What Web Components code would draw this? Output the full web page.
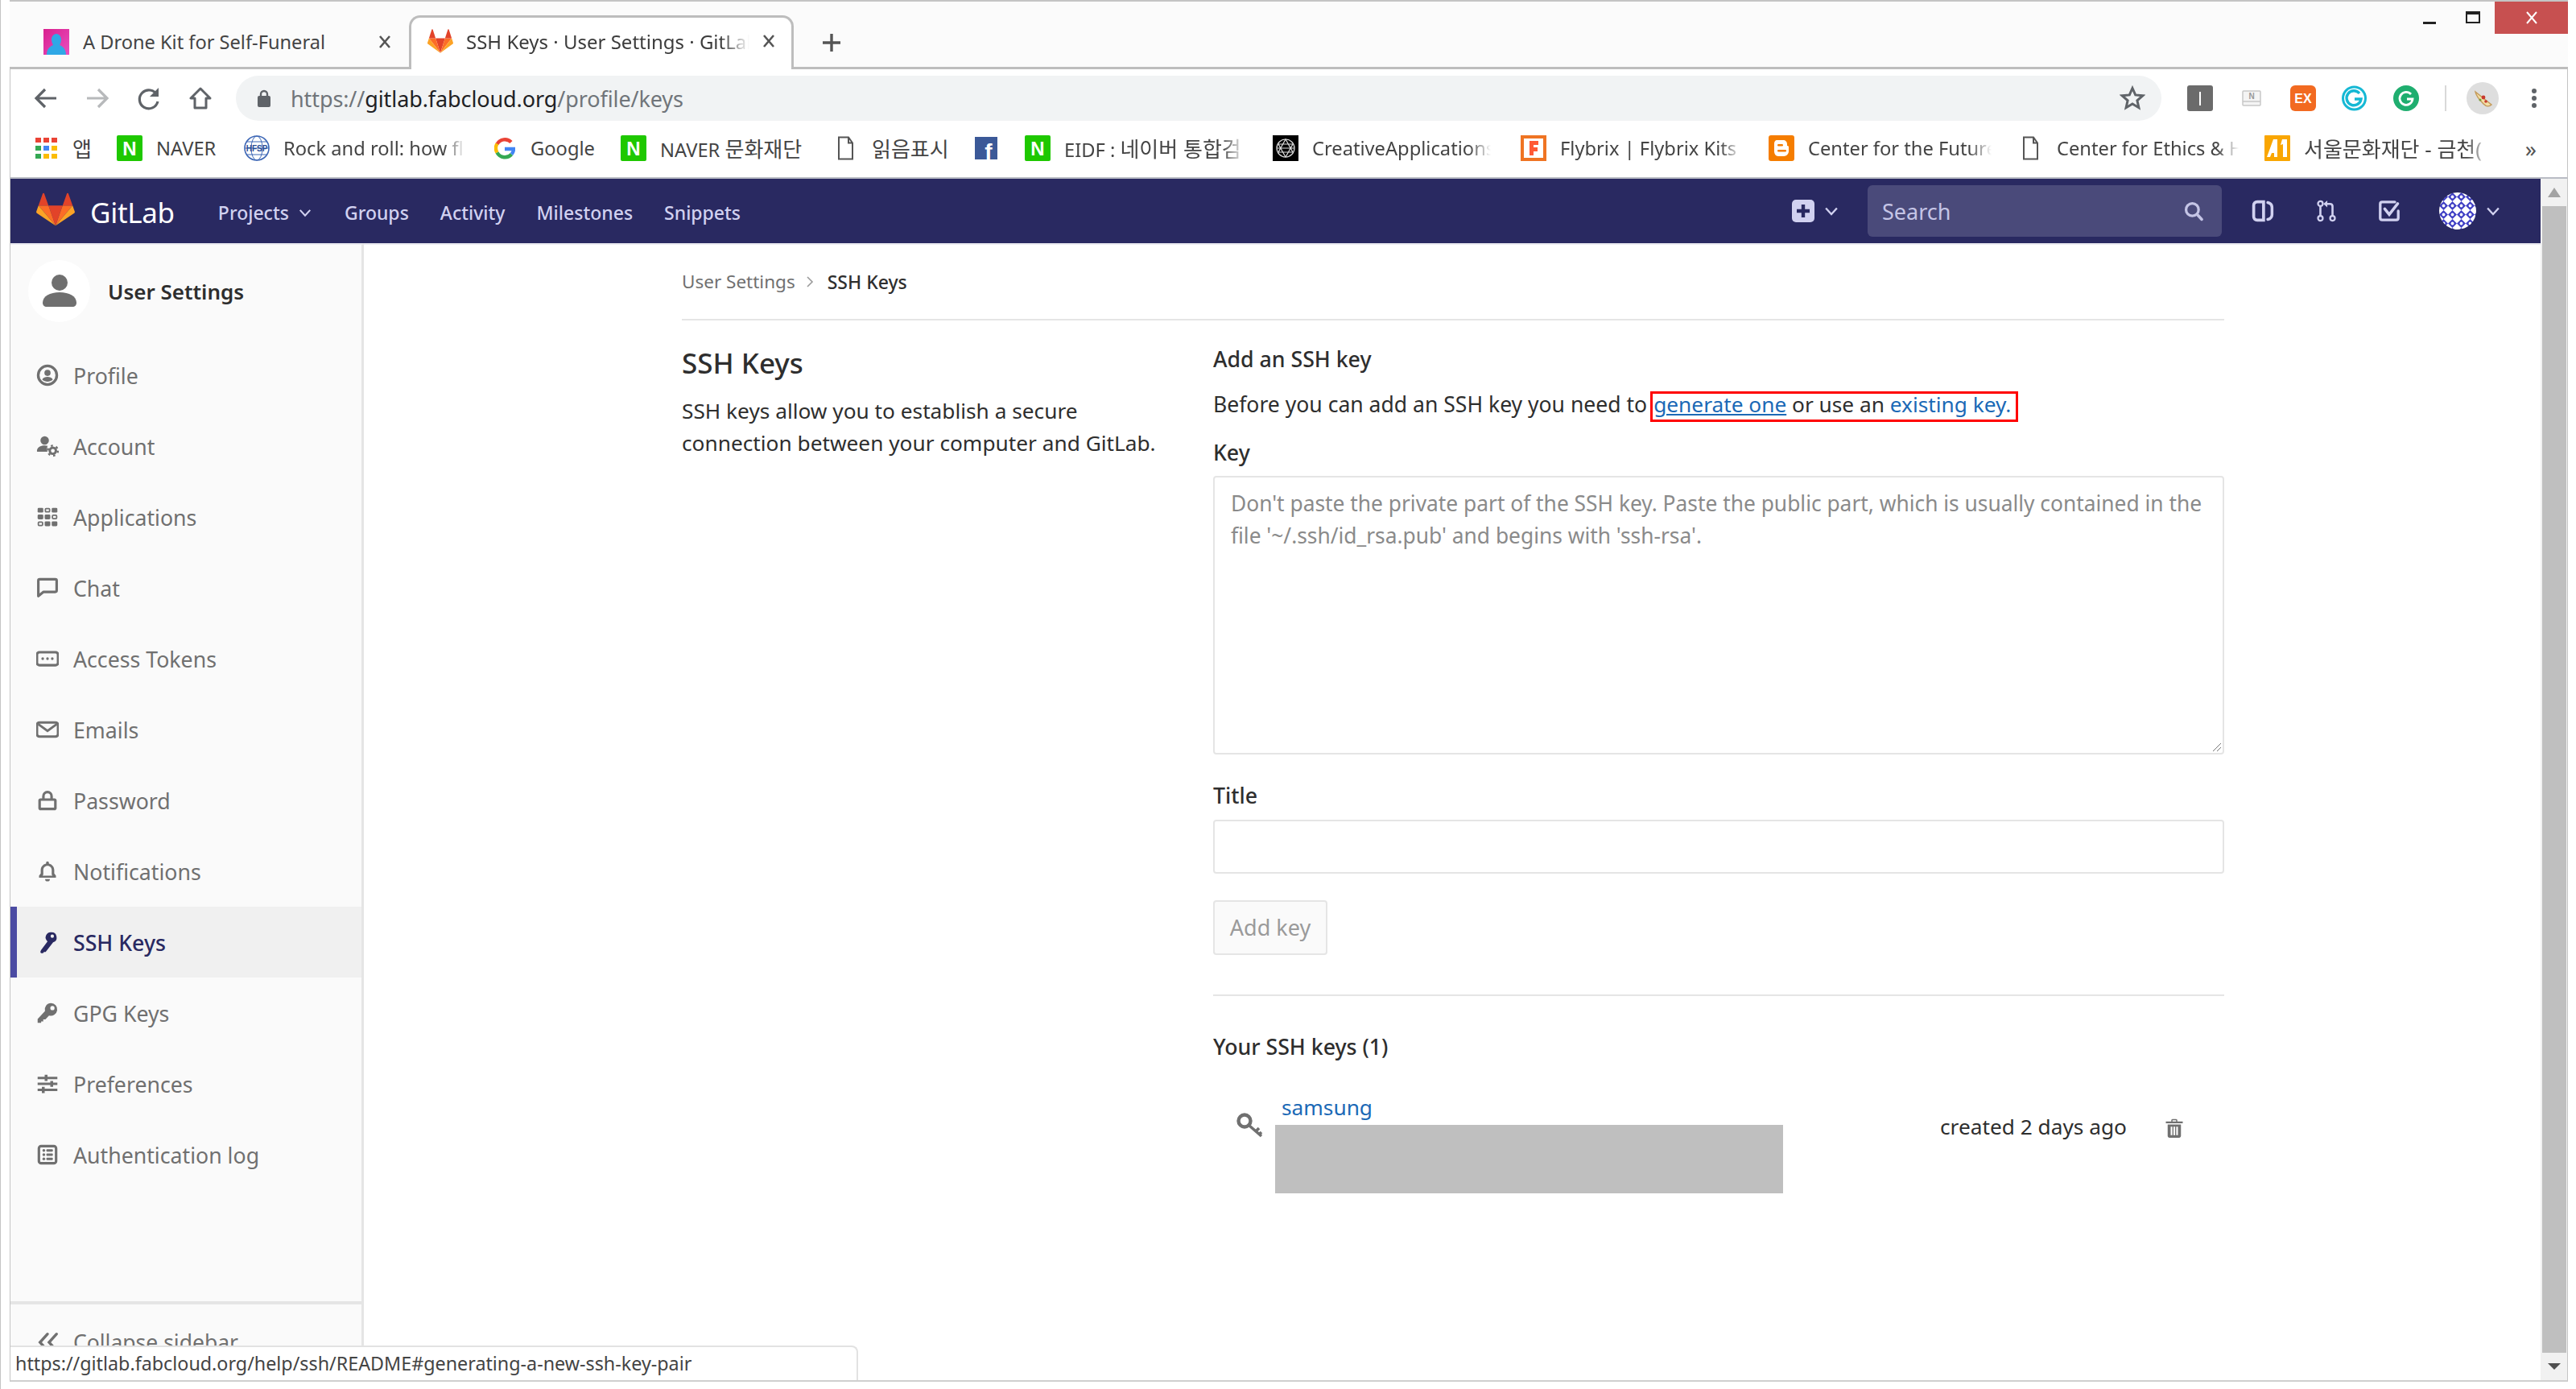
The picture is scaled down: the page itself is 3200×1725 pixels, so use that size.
<!DOCTYPE html>
<html lang="en">
<head>
<meta charset="utf-8">
<title>SSH Keys · User Settings · GitLab</title>
<style>
  html, body { margin: 0; padding: 0; width: 3200px; height: 1725px; overflow: hidden; background: #fff; }
  body { font-family: 'Noto Sans', 'Noto Sans CJK KR', sans-serif; display: flex; flex-direction: column; box-sizing: border-box; border-left: 1px solid #c4c4c4; }
  svg { display: block; }
</style>
</head>
<body>
  <chrome-tabs></chrome-tabs>
  <chrome-toolbar></chrome-toolbar>
  <chrome-bookmarks></chrome-bookmarks>
  <page-frame>
    <gl-navbar></gl-navbar>
    <gl-sidebar></gl-sidebar>
    <ssh-keys-page></ssh-keys-page>
  </page-frame>

<script>
const tanuki = `<svg viewBox="0 0 36 36" width="100%" height="100%" preserveAspectRatio="none">
  <path fill="#e24329" d="M18 34.5 24.6 14.1H11.4z"/>
  <path fill="#fc6d26" d="M18 34.5 11.4 14.1H2.1z"/>
  <path fill="#fca326" d="M2.1 14.1.1 20.3a1.4 1.4 0 0 0 .5 1.5L18 34.5z"/>
  <path fill="#e24329" d="M2.1 14.1h9.3L7.4 1.8a.7.7 0 0 0-1.3 0z"/>
  <path fill="#fc6d26" d="M18 34.5 24.6 14.1h9.3z"/>
  <path fill="#fca326" d="M33.9 14.1l2 6.2a1.4 1.4 0 0 1-.5 1.5L18 34.5z"/>
  <path fill="#e24329" d="M33.9 14.1h-9.3l4-12.3a.7.7 0 0 1 1.3 0z"/>
</svg>`

// 16x16 glyphs, painted with currentColor
const icons = {
  profile: '<circle cx="8" cy="8" r="6.6" fill="none" stroke="currentColor" stroke-width="1.9"/><circle cx="8" cy="6.3" r="2.2"/><path d="M4.2 11c.8-1.3 2.2-1.8 3.8-1.8s3 .5 3.8 1.8c-1 1-2.3 1.6-3.8 1.6S5.2 12 4.2 11z"/>',
  account: '<circle cx="6" cy="4" r="3"/><path d="M.5 11.500C.5 9 3 7.500 6 7.500c.8 0 1.500.1 2.100.3-.5 1-.6 2.700-.1 4.200H1.200c-.4 0-.7-.2-.7-.5z"/><circle cx="11.800" cy="11.300" r="2.200" fill="none" stroke="currentColor" stroke-width="1.700"/><circle cx="11.800" cy="11.300" r="3.600" fill="none" stroke="currentColor" stroke-width="1.300" stroke-dasharray="1.500 2.270"/>',
  apps: '<rect x="1" y="1.500" width="4" height="3.400" rx=".8"/><rect x="6.500" y="2" width="3" height="2.400" rx=".6" fill="none" stroke="currentColor"/><rect x="11" y="1.500" width="4" height="3.400" rx=".8"/><rect x="1" y="6.300" width="4" height="3.400" rx=".8"/><rect x="6" y="6.300" width="4" height="3.400" rx=".8"/><rect x="11.500" y="6.800" width="3" height="2.400" rx=".6" fill="none" stroke="currentColor"/><rect x="1.500" y="11.600" width="3" height="2.400" rx=".6" fill="none" stroke="currentColor"/><rect x="6" y="11.100" width="4" height="3.400" rx=".8"/><rect x="11" y="11.100" width="4" height="3.400" rx=".8"/>',
  chat: '<path fill="none" stroke="currentColor" stroke-width="1.800" stroke-linejoin="round" d="M2.500 1.900h11c.6 0 1 .4 1 1v7c0 .6-.4 1-1 1H5.200l-3.700 3V2.900c0-.6.4-1 1-1z"/>',
  token: '<rect x=".5" y="3.400" width="15" height="9.200" rx="1.800" fill="none" stroke="currentColor" stroke-width="1.800"/><circle cx="4.600" cy="8" r=".95"/><circle cx="8" cy="8" r=".95"/><circle cx="11.400" cy="8" r=".95"/>',
  mail: '<rect x=".5" y="3" width="15" height="10" rx="1.800" fill="none" stroke="currentColor" stroke-width="1.800"/><path fill="none" stroke="currentColor" stroke-width="1.600" d="M1.500 4.200 8 9l6.500-4.800"/>',
  lock: '<path d="M4.200 7V5a3.800 3.800 0 0 1 7.600 0v2H10V5a2 2 0 0 0-4 0v2z"/><path fill-rule="evenodd" d="M3 6.500h10c.8 0 1.500.7 1.500 1.500v5.500c0 .8-.7 1.500-1.500 1.500H3c-.8 0-1.500-.7-1.500-1.500V8c0-.8.7-1.500 1.500-1.500zm.3 1.800v4.900h9.400V8.300z"/>',
  bell: '<path fill-rule="evenodd" d="M8 1c.6 0 1 .4 1 1v.5c2.300.5 3.800 2.400 3.800 4.700v2.300l1.200 1.700v1.300H2v-1.300l1.200-1.700V7.200C3.200 4.900 4.700 3 7 2.500V2c0-.6.400-1 1-1zM8 4.200c-1.700 0-3 1.300-3 3v3.200l-.5.800h7l-.5-.8V7.200c0-1.700-1.300-3-3-3z"/><path d="M6.300 13.500h3.400a1.700 1.700 0 0 1-3.400 0z"/>',
  sshkey: '<path fill-rule="evenodd" d="M10.800 1a3.700 3.700 0 0 1 1.200 7.200L6.700 15H5.500l-.7.900H3.400L2.900 15l.5-1.300L8 7.500A3.700 3.700 0 0 1 10.800 1zm.6 1.600a1.200 1.200 0 1 0 0 2.400 1.200 1.200 0 0 0 0-2.400z"/>',
  gpgkey: '<path fill-rule="evenodd" d="M10.500 1a4.500 4.500 0 1 1-1.400 8.800L6.500 12.500H5v1.500H3.500v1H1v-2.700l5.200-5.600A4.500 4.500 0 0 1 10.500 1zm1 2a1.500 1.500 0 1 0 0 3 1.500 1.500 0 0 0 0-3z"/>',
  sliders: '<path d="M1 3h5V1.500h2V3h7v1.700H8v1.300H6V4.700H1zM1 7.200h9V6h2v1.200h3v1.700h-3v1.300h-2V8.900H1zM1 11.400h3v-1.200h2v1.200h9v1.700H6v1.400H4v-1.400H1z"/>',
  log: '<path fill-rule="evenodd" d="M3.500 1h9A2.500 2.500 0 0 1 15 3.500v9a2.500 2.500 0 0 1-2.500 2.500h-9A2.500 2.500 0 0 1 1 12.500v-9A2.500 2.500 0 0 1 3.500 1zm0 1.800a.7.7 0 0 0-.7.7v9c0 .4.300.7.700.7h9a.7.7 0 0 0 .7-.7v-9a.7.7 0 0 0-.7-.7z"/><circle cx="5.400" cy="5" r="1"/><circle cx="5.400" cy="8" r="1"/><circle cx="5.400" cy="11" r="1"/><rect x="7.200" y="4.200" width="4.600" height="1.600" rx=".5"/><rect x="7.200" y="7.200" width="4.600" height="1.600" rx=".5"/><rect x="7.200" y="10.200" width="4.600" height="1.600" rx=".5"/>',
  collapse: '<path fill="none" stroke="currentColor" stroke-width="1.800" stroke-linecap="round" d="M7.500 2.500 2.500 8l5 5.500M13.500 2.500 8.500 8l5 5.500"/>',
  trash: '<path fill-rule="evenodd" d="M5.500 1.500c0-.5.400-1 1-1h3c.6 0 1 .5 1 1V2.500H15v1.500H1V2.500h4.500zM6.500 1.500v1h3v-1z"/><path fill-rule="evenodd" d="M2.500 5h11v9.500c0 .8-.7 1.500-1.500 1.500H4c-.8 0-1.500-.7-1.500-1.500zM5 6.800v7h1.400v-7zm2.300 0v7h1.400v-7zm2.300 0v7H11v-7z"/>',
  search: '<circle cx="7" cy="7" r="4.800" fill="none" stroke="currentColor" stroke-width="2"/><path fill="none" stroke="currentColor" stroke-width="2.200" stroke-linecap="round" d="M10.800 10.800 14.200 14.400"/>',
  issues: '<path fill="none" stroke="currentColor" stroke-width="2.100" d="M4 1.500h4.500v13H4c-1.500 0-2.500-1-2.500-2.500V4C1.500 2.500 2.500 1.500 4 1.500z"/><path fill="none" stroke="currentColor" stroke-width="2" stroke-linecap="round" d="M11.500 2c1.800.5 3 2 3 3.500v5c0 1.500-1.200 3-3 3.500"/>',
  merge: '<circle cx="3.700" cy="2.800" r="1.700" fill="none" stroke="currentColor" stroke-width="1.300"/><circle cx="3.700" cy="13.200" r="1.700" fill="none" stroke="currentColor" stroke-width="1.300"/><circle cx="12.300" cy="13.200" r="1.700" fill="none" stroke="currentColor" stroke-width="1.300"/><path fill="none" stroke="currentColor" stroke-width="1.500" d="M3.700 4.500v7M12.300 11.500V4.800c0-1-.6-1.800-1.800-1.800H7"/><path d="M8.600 .6v4.800L5.800 3z"/>',
  todo: '<path fill="none" stroke="currentColor" stroke-width="1.900" stroke-linecap="round" d="M12 1.600H3c-.8 0-1.400.6-1.400 1.400v10c0 .8.600 1.400 1.400 1.400h10c.8 0 1.400-.6 1.400-1.400V8"/><path fill="none" stroke="currentColor" stroke-width="2" stroke-linecap="round" d="M4.800 6.500 8 10.500 14 2.800"/>',
  chevron: '<path fill="none" stroke="currentColor" stroke-width="1.700" d="M3 5.500 8 11l5-5.500"/>'
}

class GlIcon extends HTMLElement {
  constructor() {
    super()
    this.attachShadow({ mode: 'open' })
  }

  connectedCallback() {
    const size = this.getAttribute('size') || 28
    const name = this.getAttribute('name')
    this.shadowRoot.innerHTML = `
      <style>:host { display: inline-block; flex: none; width: ${size}px; height: ${size}px; line-height: 0; } svg { display: block; }</style>
      <svg viewBox="0 0 16 16" width="${size}" height="${size}" fill="currentColor">${icons[name] || ''}</svg>`
  }
}
customElements.define('gl-icon', GlIcon)

const tabsTemplate = document.createElement('template')
tabsTemplate.innerHTML = `
  <style>
    :host {
      display: flex;
      align-items: flex-end;
      flex: none;
      box-sizing: border-box;
      height: 86px;
      margin-left: 11px;
      margin-right: 10px;
      border-top: 2px solid #c4c4c4;
      background: #fbfbfb;
      box-shadow: inset 0 -3px 0 #bdbdbd;
      font-size: 24px;
      color: #444;
    }
    .tab { display: flex; align-items: center; box-sizing: border-box; }
    #first { width: 496px; height: 100px; padding-left: 42px; align-self: flex-start; font-size: 23.6px; }
    #second {
      width: 478px;
      height: 67px;
      padding-left: 20px;
      padding-bottom: 6px;
      background: #fff;
      border: 3px solid #bdbdbd;
      border-bottom: none;
      border-radius: 14px 14px 0 0;
      color: #3c3c3c;
    }
    .title { white-space: nowrap; overflow: hidden; }
    #first .title { width: 340px; margin-left: 17px; }
    #second .title {
      width: 352px;
      margin-left: 16px;
      -webkit-mask-image: linear-gradient(90deg, #000 90%, transparent 100%);
      mask-image: linear-gradient(90deg, #000 90%, transparent 100%);
    }
    .close { width: 20px; height: 20px; margin-left: 14px; flex: none; }
    #first .close { margin-left: 25px; }
    #plus { margin-left: 35px; margin-bottom: 21px; flex: none; align-self: flex-end; }
    #favicon { width: 32px; height: 32px; flex: none; }
    #fox { width: 32px; height: 32px; flex: none; }
    #winctl { margin-left: auto; align-self: flex-start; display: flex; }
    #min { width: 24px; height: 42px; display: flex; align-items: flex-end; padding-bottom: 14px; box-sizing: border-box; margin-right: 29px; }
    #min i { display: block; width: 16px; height: 3px; background: #222; }
    #max { width: 18px; height: 15px; box-sizing: border-box; border: 2px solid #222; border-top-width: 4px; margin: 12px 18px 0 0; }
    #exit { width: 91px; height: 40px; background: #c75050; display: flex; align-items: center; justify-content: center; }
  </style>
  <div class="tab" id="first">
    <svg id="favicon" viewBox="0 0 32 32">
      <defs><linearGradient id="fg" x1="0" y1="0" x2="1" y2="1"><stop offset="0" stop-color="#d9208e"/><stop offset="1" stop-color="#e94fc0"/></linearGradient></defs>
      <rect width="32" height="32" fill="url(#fg)"/>
      <path d="M4 32c0-8 5-11 8-12-1-2-2-4-2-7 0-4 3-7 6-7s6 3 6 7c0 3-1 5-2 7 3 1 8 4 8 12z" fill="#2fa8e6"/>
    </svg>
    <div class="title">A Drone Kit for Self-Funeral</div>
    <svg class="close" viewBox="0 0 20 20"><path d="M4 3l12 14M16 3 4 17" stroke="#555" stroke-width="2.600"/></svg>
  </div>
  <div class="tab" id="second">
    <div id="fox">${tanuki}</div>
    <div class="title">SSH Keys · User Settings · GitLab</div>
    <svg class="close" viewBox="0 0 20 20"><path d="M4 3l12 14M16 3 4 17" stroke="#555" stroke-width="2.600"/></svg>
  </div>
  <svg id="plus" width="24" height="24" viewBox="0 0 24 24"><path d="M12 1v22M1 12h22" stroke="#555" stroke-width="3.400"/></svg>
  <div id="winctl">
    <div id="min"><i></i></div>
    <div id="max"></div>
    <div id="exit"><svg width="16" height="16" viewBox="0 0 16 16"><path d="M2 1l12 14M14 1 2 15" stroke="#fff" stroke-width="2"/></svg></div>
  </div>
`

class ChromeTabs extends HTMLElement {
  constructor() {
    super()
    this.attachShadow({ mode: 'open' }).appendChild(tabsTemplate.content.cloneNode(true))
  }
}
customElements.define('chrome-tabs', ChromeTabs)

const toolbarTemplate = document.createElement('template')
toolbarTemplate.innerHTML = `
  <style>
    :host {
      display: flex;
      align-items: center;
      flex: none;
      box-sizing: border-box;
      height: 64px;
      margin-left: 11px;
      margin-right: 10px;
      padding: 8px 0 0 28px;
      background: #fff;
      border-left: 1px solid #c4c4c4;
      border-right: 1px solid #c4c4c4;
      color: #5f6368;
    }
    .nav { width: 64px; display: flex; flex: none; }
    #omni {
      display: flex;
      align-items: center;
      flex: none;
      box-sizing: border-box;
      width: 2392px;
      height: 56px;
      margin-left: 12px;
      padding: 0 20px 0 26px;
      background: #f1f3f4;
      border-radius: 28px;
      font-size: 27px;
      white-space: nowrap;
    }
    #url { margin-left: 24px; color: #70757a; flex: 1; letter-spacing: -.1px; }
    #url b { font-weight: 400; color: #202124; }
    #exts { display: flex; align-items: center; flex: none; margin-left: 32px; }
    #exts > * { flex: none; }
    text { font-family: 'Liberation Sans', sans-serif; }
  </style>
  <div class="nav"><svg width="32" height="32" viewBox="0 0 32 32"><path d="M29 16H5M15 5 4 16l11 11" fill="none" stroke="#5f6368" stroke-width="3.200"/></svg></div>
  <div class="nav"><svg width="32" height="32" viewBox="0 0 32 32"><path d="M3 16h24M17 5l11 11-11 11" fill="none" stroke="#b7b9bb" stroke-width="3.200"/></svg></div>
  <div class="nav"><svg width="32" height="32" viewBox="0 0 32 32"><path d="M26 12a11.500 11.500 0 1 0 1 8" fill="none" stroke="#5f6368" stroke-width="3.200"/><path d="M28 3v11H17z" fill="#5f6368"/></svg></div>
  <div class="nav" style="width:48px"><svg width="32" height="32" viewBox="0 0 32 32"><path d="M16 4 4 16h5v12h14V16h5z" fill="none" stroke="#5f6368" stroke-width="3" stroke-linejoin="round"/></svg></div>
  <div id="omni">
    <svg width="18" height="24" viewBox="0 0 18 24" style="flex:none"><path d="M5 10V7a4 4 0 0 1 8 0v3" fill="none" stroke="#5f6368" stroke-width="2.400"/><rect x="1" y="9" width="16" height="14" rx="2" fill="#5f6368"/></svg>
    <div id="url">https://<b>gitlab.fabcloud.org</b>/profile/keys</div>
    <svg width="32" height="32" viewBox="0 0 32 32" style="flex:none"><path d="M16 3.500l3.700 8.400 9 .9-6.800 6 2 8.900-7.900-4.700-7.900 4.700 2-8.900-6.800-6 9-.9z" fill="none" stroke="#5f6368" stroke-width="3"/></svg>
  </div>
  <div id="exts">
    <svg width="32" height="32" viewBox="0 0 32 32"><rect width="32" height="32" rx="3" fill="#6b6b6b"/><rect x="15" y="8" width="2" height="17" fill="#fff"/></svg>
    <svg width="24" height="20" viewBox="0 0 24 20" style="margin-left:36px"><rect x="1" y="1" width="22" height="18" rx="1" fill="#f4f4f4" stroke="#c7c7c7" stroke-width="1.500"/><path d="M1 14h22" stroke="#c7c7c7" stroke-width="1.500"/><text x="12" y="11" text-anchor="middle" font-size="10" font-weight="700" fill="#999">N</text></svg>
    <svg width="32" height="32" viewBox="0 0 32 32" style="margin-left:36px"><rect width="32" height="32" rx="6" fill="#f26a21"/><text x="16" y="22" text-anchor="middle" font-size="16" font-weight="700" fill="#fff">EX</text></svg>
    <svg width="33" height="32" viewBox="0 0 33 32" style="margin-left:31px"><circle cx="16.500" cy="16" r="15.500" fill="#15b8d4"/><circle cx="16.500" cy="16" r="12.500" fill="#fff"/><path d="M23 10a9 9 0 1 0 2 7H17" fill="none" stroke="#15b8d4" stroke-width="3.400"/></svg>
    <svg width="32" height="32" viewBox="0 0 32 32" style="margin-left:32px"><circle cx="16" cy="16" r="16" fill="#1fae6f"/><path d="M22 11a8 8 0 1 0 2 6h-7" fill="none" stroke="#fff" stroke-width="2.800"/></svg>
    <div style="width:2px;height:32px;background:#d9d9d9;margin-left:32px"></div>
    <svg width="40" height="40" viewBox="0 0 40 40" style="margin-left:25px"><circle cx="20" cy="20" r="20" fill="#dedede"/><path d="M11 12 31 28c-3 3-7 2-10-1s-9-9-10-15z" fill="#f3dfa6" stroke="#c49a5a" stroke-width="1.500"/><circle cx="21" cy="19" r="2.400" fill="#c8392e"/><circle cx="17" cy="22" r="1.600" fill="#7a9b3c"/><circle cx="24" cy="24" r="1.800" fill="#c8392e"/></svg>
    <svg width="8" height="26" viewBox="0 0 8 26" style="margin-left:40px"><circle cx="4" cy="4" r="3" fill="#5f6368"/><circle cx="4" cy="13" r="3" fill="#5f6368"/><circle cx="4" cy="22" r="3" fill="#5f6368"/></svg>
  </div>
`

class ChromeToolbar extends HTMLElement {
  constructor() {
    super()
    this.attachShadow({ mode: 'open' }).appendChild(toolbarTemplate.content.cloneNode(true))
  }
}
customElements.define('chrome-toolbar', ChromeToolbar)

const bookmarkIcons = {
  apps: `<svg width="27" height="26" viewBox="0 0 27 26"><g fill="#ea4335"><rect width="7" height="6"/><rect x="10" width="7" height="6"/><rect x="20" width="7" height="6"/></g><rect y="10" width="7" height="6" fill="#34a853"/><rect x="10" y="10" width="7" height="6" fill="#4285f4"/><rect x="20" y="10" width="7" height="6" fill="#fbbc05"/><rect y="20" width="7" height="6" fill="#34a853"/><rect x="10" y="20" width="7" height="6" fill="#fbbc05"/><rect x="20" y="20" width="7" height="6" fill="#fbbc05"/></svg>`,
  naver: `<svg width="32" height="32" viewBox="0 0 32 32"><rect width="32" height="32" rx="2" fill="#1ec800"/><text x="16" y="25" text-anchor="middle" font-size="24" font-weight="700" fill="#fff">N</text></svg>`,
  hfsp: `<svg width="32" height="32" viewBox="0 0 32 32"><circle cx="16" cy="16" r="15" fill="#fff" stroke="#3c66b5" stroke-width="1.600"/><ellipse cx="16" cy="16" rx="7" ry="15" fill="none" stroke="#3c66b5"/><path d="M3 8h26M3 24h26M1 16h30" stroke="#3c66b5" stroke-width="1"/><text x="16" y="20" text-anchor="middle" font-size="10" font-weight="700" fill="#2a4d96">HFSP</text></svg>`,
  google: `<svg width="26" height="28" viewBox="0 0 26 28"><path d="M21 6.500A11 11 0 0 0 3.500 9" fill="none" stroke="#ea4335" stroke-width="4.400"/><path d="M3.500 8.500a11 11 0 0 0 0 11" fill="none" stroke="#fbbc05" stroke-width="4.400"/><path d="M3.500 19.500a11 11 0 0 0 18 2" fill="none" stroke="#34a853" stroke-width="4.400"/><path d="M21.500 21.500c1.800-2 2.500-4 2.500-6.500H13" fill="none" stroke="#4285f4" stroke-width="4.400"/></svg>`,
  doc: `<svg width="24" height="30" viewBox="0 0 24 30"><path d="M6 1.500h9l5 7v20H3V1.500zM15 1.500v7h5" fill="#fff" stroke="#555" stroke-width="2"/></svg>`,
  facebook: `<svg width="28" height="28" viewBox="0 0 28 28"><rect width="28" height="28" fill="#3b5998"/><text x="17" y="28" text-anchor="middle" font-size="28" font-weight="700" fill="#fff">f</text></svg>`,
  ca: `<svg width="32" height="32" viewBox="0 0 32 32"><rect width="32" height="32" fill="#000"/><g fill="none" stroke="#ddd" stroke-width="1.200"><circle cx="16" cy="16" r="11"/><path d="M16 5 7 21h18zM16 27 7 11h18zM5 16h22"/></g></svg>`,
  flybrix: `<svg width="32" height="32" viewBox="0 0 32 32"><rect width="32" height="32" fill="#ef7423"/><rect x="4" y="4" width="24" height="24" fill="#fff"/><path d="M11 7h11v5h-6v3h5v5h-5v5h-5z" fill="#ff5a36"/></svg>`,
  blogger: `<svg width="32" height="32" viewBox="0 0 32 32"><rect width="32" height="32" rx="3" fill="#f57d00"/><path d="M11 6h7c3 0 5 2 5 5v2c2 0 2 1 2 2v5c0 3-3 6-6 6h-7c-3 0-5-3-5-6v-9c0-3 1-5 4-5z" fill="#fff"/><rect x="11" y="11" width="7" height="2.500" rx="1.200" fill="#f57d00"/><rect x="11" y="18" width="11" height="2.500" rx="1.200" fill="#f57d00"/></svg>`,
  adobe: `<svg width="32" height="32" viewBox="0 0 32 32"><rect width="32" height="32" rx="1" fill="#f9a602"/><path d="M3 27 11 5h5v22h-4v-5H9l-2 5zM22 5h6v22h-5V11l-3 1z" fill="#fff"/></svg>`
}

const bookmarkTemplate = document.createElement('template')
bookmarkTemplate.innerHTML = `
  <style>
    :host {
      display: flex;
      align-items: center;
      flex: none;
      box-sizing: border-box;
      height: 100%;
      font-size: 23.7px;
      color: #444;
      white-space: nowrap;
    }
    #icon { flex: none; display: flex; align-items: center; }
    text { font-family: 'Liberation Sans', sans-serif; }
    #label { overflow: hidden; margin-left: var(--gap, 17px); }
    :host([fade]) #label {
      -webkit-mask-image: linear-gradient(90deg, #000 88%, transparent 100%);
      mask-image: linear-gradient(90deg, #000 88%, transparent 100%);
    }
  </style>
  <div id="icon"></div>
  <div id="label"><slot></slot></div>
`

class BookmarkItem extends HTMLElement {
  constructor() {
    super()
    this.attachShadow({ mode: 'open' }).appendChild(bookmarkTemplate.content.cloneNode(true))
  }

  connectedCallback() {
    this.shadowRoot.getElementById('icon').innerHTML = bookmarkIcons[this.getAttribute('icon')]
    this.style.width = this.getAttribute('w') + 'px'
    if (this.hasAttribute('lw')) this.shadowRoot.getElementById('label').style.width = this.getAttribute('lw') + 'px'
  }
}
customElements.define('bookmark-item', BookmarkItem)

class ChromeBookmarks extends HTMLElement {
  constructor() {
    super()
    this.attachShadow({ mode: 'open' }).innerHTML = `
      <style>
        :host {
          display: flex;
          align-items: center;
          flex: none;
          box-sizing: border-box;
          height: 72px;
          margin-left: 11px;
          margin-right: 10px;
          padding: 0 0 2px 31px;
          background: #fff;
          border-left: 1px solid #c4c4c4;
          border-right: 1px solid #c4c4c4;
          border-bottom: 2px solid #b9bcc4;
        }
        #more { margin-left: auto; margin-right: 38px; font-size: 28px; color: #555; }
        .ko { font-size: 26px; }
      </style>
      <bookmark-item icon="apps" w="101" style="--gap:19px"><span class="ko">앱</span></bookmark-item>
      <bookmark-item icon="naver" w="158">NAVER</bookmark-item>
      <bookmark-item icon="hfsp" w="311" lw="226" fade>Rock and roll: how fl</bookmark-item>
      <bookmark-item icon="google" w="157" style="--gap:19px">Google</bookmark-item>
      <bookmark-item icon="naver" w="268">NAVER <span class="ko">문화재단</span></bookmark-item>
      <bookmark-item icon="doc" w="172" style="--gap:20px"><span class="ko">읽음표시</span></bookmark-item>
      <bookmark-item icon="facebook" w="62"></bookmark-item>
      <bookmark-item icon="naver" w="308" lw="224" fade>EIDF : <span class="ko">네이버 통합검</span></bookmark-item>
      <bookmark-item icon="ca" w="308" lw="222" fade>CreativeApplications.</bookmark-item>
      <bookmark-item icon="flybrix" w="308" lw="226" fade>Flybrix | Flybrix Kits M</bookmark-item>
      <bookmark-item icon="blogger" w="314" lw="228" fade>Center for the Future</bookmark-item>
      <bookmark-item icon="doc" w="302" lw="226" fade style="--gap:20px">Center for Ethics &amp; H</bookmark-item>
      <bookmark-item icon="adobe" w="290" lw="230" fade><span class="ko">서울문화재단 - 금천(</span></bookmark-item>
      <div id="more">»</div>
    `
  }
}
customElements.define('chrome-bookmarks', ChromeBookmarks)

// Grid: navbar on top, sidebar + main below, page scrollbar down the whole right side
const frameTemplate = document.createElement('template')
frameTemplate.innerHTML = `
  <style>
    :host {
      display: grid;
      grid-template-columns: 436px 3px 1fr 33px;
      grid-template-rows: 80px 1fr;
      flex: none;
      box-sizing: border-box;
      height: 1494px;
      margin-left: 11px;
      margin-right: 10px;
      border-left: 1px solid #c4c4c4;
      border-right: 1px solid #c4c4c4;
      border-bottom: 2px solid #cfcfcf;
      position: relative;
      overflow: hidden;
    }
    ::slotted(gl-navbar) { grid-column: 1 / 4; grid-row: 1; }
    ::slotted(gl-sidebar) { grid-column: 1 / 3; grid-row: 2; }
    ::slotted(ssh-keys-page) { grid-column: 3; grid-row: 2; }
    #scroll {
      grid-column: 4;
      grid-row: 1 / 3;
      display: flex;
      flex-direction: column;
      background: #f1f1f1;
      box-sizing: border-box;
      padding: 0 1px 0 2px;
    }
    .btn { height: 34px; flex: none; display: flex; align-items: center; justify-content: center; }
    #thumb { flex: 1; background: #bfbfbf; }
    #bubble {
      position: absolute;
      left: 0;
      bottom: 0;
      box-sizing: border-box;
      width: 1053px;
      height: 43px;
      padding: 0 0 1px 6px;
      display: flex;
      align-items: center;
      background: #fff;
      border-top: 2px solid #e2e2e2;
      border-right: 2px solid #e2e2e2;
      border-top-right-radius: 8px;
      font-size: 23.3px;
      color: #444;
      white-space: nowrap;
    }
  </style>
  <slot></slot>
  <div id="scroll">
    <div class="btn"><svg width="18" height="14" viewBox="0 0 18 14"><path d="M9 1l8 12H1z" fill="#a3a3a3"/></svg></div>
    <div id="thumb"></div>
    <div class="btn"><svg width="18" height="10" viewBox="0 0 18 10"><path d="M1 1h16L9 9z" fill="#505050"/></svg></div>
  </div>
  <div id="bubble">https://gitlab.fabcloud.org/help/ssh/README#generating-a-new-ssh-key-pair</div>
`

class PageFrame extends HTMLElement {
  constructor() {
    super()
    this.attachShadow({ mode: 'open' }).appendChild(frameTemplate.content.cloneNode(true))
  }
}
customElements.define('page-frame', PageFrame)

const navbarTemplate = document.createElement('template')
navbarTemplate.innerHTML = `
  <style>
    :host {
      display: flex;
      align-items: center;
      box-sizing: border-box;
      background: #292961;
      color: #d1d1f0;
      padding: 0 0 0 32px;
      font-size: 23px;
      font-weight: 500;
    }
    #fox { width: 48px; height: 44px; flex: none; margin-top: -4px; }
    #brand { font-size: 35px; font-weight: 400; color: #fff; margin-left: 19px; margin-right: 54px; letter-spacing: -.3px; padding-top: 2px; }
    .link { display: flex; align-items: center; margin-right: 39px; white-space: nowrap; padding-top: 3px; }
    .link gl-icon { margin-left: 10px; }
    #right { margin-left: auto; display: flex; align-items: center; }
    #plus { width: 28px; height: 28px; color: #d1d1f0; flex: none; }
    #new { display: flex; align-items: center; }
    #search {
      display: flex;
      align-items: center;
      justify-content: space-between;
      box-sizing: border-box;
      width: 440px;
      height: 64px;
      margin-left: 34px;
      padding: 0 22px 0 18px;
      background: #4a4a7a;
      border-radius: 6px;
      font-size: 27px;
      font-weight: 400;
      color: #c5c5e6;
    }
    .tool { margin-left: 38px; display: flex; }
    #avatar { margin-left: 48px; display: flex; align-items: center; margin-right: 48px; }
    #avatar svg { flex: none; }
  </style>
  <div id="fox">${tanuki}</div>
  <div id="brand">GitLab</div>
  <div class="link">Projects<gl-icon name="chevron" size="20"></gl-icon></div>
  <div class="link">Groups</div>
  <div class="link">Activity</div>
  <div class="link">Milestones</div>
  <div class="link">Snippets</div>
  <div id="right">
    <div id="new">
      <svg id="plus" viewBox="0 0 28 28"><rect width="28" height="28" rx="5" fill="#d1d1f0"/><path d="M14 6v16M6 14h16" stroke="#292961" stroke-width="4.400"/></svg>
      <gl-icon name="chevron" size="22" style="margin-left:10px"></gl-icon>
    </div>
    <div id="search">Search<gl-icon name="search" size="26"></gl-icon></div>
    <div class="tool" style="margin-left:37px"><gl-icon name="issues" size="28"></gl-icon></div>
    <div class="tool" style="margin-left:51px"><gl-icon name="merge" size="28"></gl-icon></div>
    <div class="tool" style="margin-left:50px"><gl-icon name="todo" size="28"></gl-icon></div>
    <div id="avatar">
      <svg width="46" height="46" viewBox="0 0 46 46">
        <defs><pattern id="av" width="11" height="11" patternUnits="userSpaceOnUse"><rect width="11" height="11" fill="#fff"/><path d="M5.500 0 11 5.500 5.500 11 0 5.500z" fill="#3f3fc4"/><circle cx="5.500" cy="5.500" r="1.900" fill="#fff"/></pattern></defs>
        <circle cx="23" cy="23" r="23" fill="url(#av)"/>
      </svg>
      <gl-icon name="chevron" size="22" style="margin-left:10px"></gl-icon>
    </div>
  </div>
`

class GlNavbar extends HTMLElement {
  constructor() {
    super()
    this.attachShadow({ mode: 'open' }).appendChild(navbarTemplate.content.cloneNode(true))
  }
}
customElements.define('gl-navbar', GlNavbar)

class GlNavItem extends HTMLElement {
  constructor() {
    super()
    this.attachShadow({ mode: 'open' })
  }

  connectedCallback() {
    this.shadowRoot.innerHTML = `
      <style>
        :host {
          display: flex;
          align-items: center;
          flex: none;
          box-sizing: border-box;
          height: 88px;
          padding-left: 32px;
          font-size: 26.7px;
          color: #707070;
          white-space: nowrap;
        }
        :host([active]) {
          padding-left: 24px;
          border-left: 8px solid #4b4ba3;
          background: #f0f0f0;
          color: #292961;
          font-weight: 500;
        }
        gl-icon { margin-right: 18px; }
      </style>
      <gl-icon name="${this.getAttribute('icon')}"></gl-icon>
      <slot></slot>
    `
  }
}
customElements.define('gl-nav-item', GlNavItem)

const sidebarTemplate = document.createElement('template')
sidebarTemplate.innerHTML = `
  <style>
    :host {
      display: flex;
      flex-direction: column;
      box-sizing: border-box;
      background: #fafafa;
      border-top: 2px solid #e9e9f0;
      border-right: 3px solid #e5e5e5;
    }
    #head {
      display: flex;
      align-items: center;
      padding: 19px 0 22px 22px;
      font-size: 26px;
      font-weight: 600;
      color: #2e2e2e;
    }
    #avatar {
      width: 77px;
      height: 77px;
      flex: none;
      margin-right: 22px;
      border-radius: 50%;
      background: #fff;
      display: flex;
      align-items: center;
      justify-content: center;
    }
    #foot {
      margin-top: auto;
      box-sizing: border-box;
      height: 98px;
      border-top: 4px solid #e5e5e5;
      display: flex;
      align-items: center;
      padding: 0 0 0 32px;
      font-size: 26.5px;
      color: #707070;
      white-space: nowrap;
    }
    #foot span { margin-left: 16px; }
  </style>
  <div id="head">
    <div id="avatar"><svg width="44" height="44" viewBox="0 0 44 44"><circle cx="22" cy="11" r="10" fill="#6f6f6f"/><path d="M1 36c0-8 9-13 21-13s21 5 21 13c0 3-2 5-5 5H6c-3 0-5-2-5-5z" fill="#6f6f6f"/></svg></div>
    User Settings
  </div>
  <gl-nav-item icon="profile">Profile</gl-nav-item>
  <gl-nav-item icon="account">Account</gl-nav-item>
  <gl-nav-item icon="apps">Applications</gl-nav-item>
  <gl-nav-item icon="chat">Chat</gl-nav-item>
  <gl-nav-item icon="token">Access Tokens</gl-nav-item>
  <gl-nav-item icon="mail">Emails</gl-nav-item>
  <gl-nav-item icon="lock">Password</gl-nav-item>
  <gl-nav-item icon="bell">Notifications</gl-nav-item>
  <gl-nav-item icon="sshkey" active>SSH Keys</gl-nav-item>
  <gl-nav-item icon="gpgkey">GPG Keys</gl-nav-item>
  <gl-nav-item icon="sliders">Preferences</gl-nav-item>
  <gl-nav-item icon="log">Authentication log</gl-nav-item>
  <div id="foot"><gl-icon name="collapse" size="30"></gl-icon><span>Collapse sidebar</span></div>
`

class GlSidebar extends HTMLElement {
  constructor() {
    super()
    this.attachShadow({ mode: 'open' }).appendChild(sidebarTemplate.content.cloneNode(true))
  }
}
customElements.define('gl-sidebar', GlSidebar)

const pageTemplate = document.createElement('template')
pageTemplate.innerHTML = `
  <style>
    :host {
      display: block;
      box-sizing: border-box;
      border-top: 2px solid #e9e9f0;
      background: #fff;
      color: #2e2e2e;
      font-size: 26.25px;
      line-height: 40px;
      overflow: hidden;
    }
    #wrap { width: 1916px; margin: 0 0 0 395px; }
    #crumbs {
      display: flex;
      align-items: center;
      box-sizing: border-box;
      height: 94px;
      border-bottom: 2px solid #e5e5e5;
      font-size: 22.5px;
      color: #707070;
    }
    #crumbs b { font-size: 23px; font-weight: 500; color: #2e2e2e; }
    #crumbs svg { margin: 0 17px 0 13px; }
    #cols { display: grid; grid-template-columns: 660px 1256px; }
    h4 { margin: 29px 0 15px; font-size: 35px; line-height: 48px; font-weight: 500; }
    #left p { margin: 0; }
    h5 { margin: 28px 0 0; font-size: 26.7px; line-height: 40px; font-weight: 500; }
    #before { margin: 16px 0 0; height: 40px; white-space: nowrap; font-size: 26.55px; }
    a { color: #1b69b6; text-decoration: none; }
    #note {
      display: inline-block;
      box-sizing: border-box;
      height: 38px;
      line-height: 26px;
      font-size: 26.25px;
      padding: 0 6px 0 1px;
      margin-left: 4px;
      border: 3px solid #ff0000;
    }
    #gen { text-decoration: underline; }
    label { display: block; font-size: 26.7px; font-weight: 500; }
    #key-label { margin-top: 20px; }
    #area {
      position: relative;
      box-sizing: border-box;
      height: 346px;
      margin-top: 9px;
      padding: 12px 20px;
      border: 2px solid #e5e5e5;
      border-radius: 4px;
      color: #8a8a8a;
      font-size: 26.35px;
    }
    #grip { position: absolute; right: 1px; bottom: 1px; }
    #title-label { margin-top: 31px; }
    input {
      display: block;
      box-sizing: border-box;
      width: 100%;
      height: 67px;
      margin-top: 10px;
      border: 2px solid #e5e5e5;
      border-radius: 4px;
      background: #fff;
    }
    button {
      display: block;
      box-sizing: border-box;
      width: 142px;
      height: 68px;
      margin-top: 33px;
      padding: 0;
      font: inherit;
      font-size: 27px;
      color: #9a9a9a;
      background: #fafafa;
      border: 2px solid #e5e5e5;
      border-radius: 4px;
    }
    hr { margin: 49px 0 0; border: none; height: 2px; background: #e5e5e5; }
    #keys-title { margin-top: 43px; }
    #row { display: flex; align-items: flex-start; margin-top: 37px; }
    #row-key { margin: 25px 0 0 29px; color: #707070; }
    #row-body { margin-left: 14px; width: 631px; }
    #row-body a { display: block; padding-left: 8px; height: 40px; line-height: 36px; }
    #redact { height: 85px; background: #bfbfbf; }
    #created { margin: 22px 0 0 195px; white-space: nowrap; }
    #row-del { margin: 32px 0 0 47px; color: #707070; }
  </style>
  <div id="wrap">
    <div id="crumbs">User Settings<svg width="10" height="16" viewBox="0 0 10 16"><path d="M2 2l6 6-6 6" fill="none" stroke="#9a9a9a" stroke-width="1.600"/></svg><b>SSH Keys</b></div>
    <div id="cols">
      <div id="left">
        <h4>SSH Keys</h4>
        <p>SSH keys allow you to establish a secure<br>connection between your computer and GitLab.</p>
      </div>
      <div id="right">
        <h5>Add an SSH key</h5>
        <p id="before">Before you can add an SSH key you need to<span id="note"><a id="gen">generate one</a> or use an <a>existing key.</a></span></p>
        <label id="key-label">Key</label>
        <div id="area">Don't paste the private part of the SSH key. Paste the public part, which is usually contained in the file '~/.ssh/id_rsa.pub' and begins with 'ssh-rsa'.
          <svg id="grip" width="14" height="14" viewBox="0 0 14 14"><path d="M13 3 3 13M13 8l-5 5" stroke="#777" stroke-width="1"/></svg>
        </div>
        <label id="title-label">Title</label>
        <input type="text" aria-label="Title">
        <button disabled>Add key</button>
        <hr>
        <h5 id="keys-title">Your SSH keys (1)</h5>
        <div id="row">
          <svg id="row-key" width="34" height="32" viewBox="0 0 34 32"><circle cx="10" cy="10" r="7.500" fill="none" stroke="#707070" stroke-width="4.400"/><path d="M15.500 15.500 31 29M24 23l4-4M28 27l3-3" fill="none" stroke="#707070" stroke-width="3.600"/></svg>
          <div id="row-body"><a>samsung</a><div id="redact"></div></div>
          <div id="created">created 2 days ago</div>
          <gl-icon id="row-del" name="trash" size="24"></gl-icon>
        </div>
      </div>
    </div>
  </div>
`

class SshKeysPage extends HTMLElement {
  constructor() {
    super()
    this.attachShadow({ mode: 'open' }).appendChild(pageTemplate.content.cloneNode(true))
  }
}
customElements.define('ssh-keys-page', SshKeysPage)
</script>
</body>
</html>
